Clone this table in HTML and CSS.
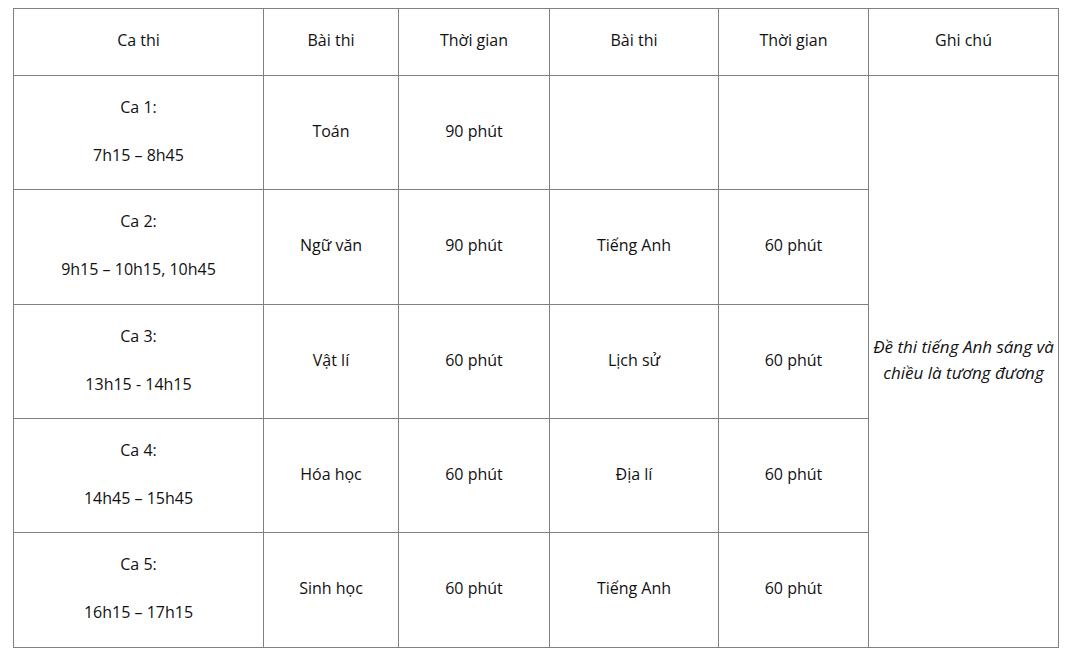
FILE: index.html
```html
<!DOCTYPE html>
<html lang="vi">
<head>
<meta charset="utf-8">
<title>Lịch thi</title>
<link rel="stylesheet" href="styles.css">
</head>
<body>
<table class="schedule">
  <colgroup>
    <col class="c1"><col class="c2"><col class="c3"><col class="c4"><col class="c5"><col class="c6">
  </colgroup>
  <thead>
    <tr class="head">
      <th>Ca thi</th><th>Bài thi</th><th>Thời gian</th><th>Bài thi</th><th>Thời gian</th><th>Ghi chú</th>
    </tr>
  </thead>
  <tbody>
    <tr class="row">
      <td><p>Ca 1:</p><p>7h15 – 8h45</p></td>
      <td>Toán</td><td>90 phút</td><td></td><td></td>
      <td rowspan="5" class="note"><em>Đề thi tiếng Anh sáng và chiều là tương đương</em></td>
    </tr>
    <tr class="row tall">
      <td><p>Ca 2:</p><p>9h15 – 10h15, 10h45</p></td>
      <td>Ngữ văn</td><td>90 phút</td><td>Tiếng Anh</td><td>60 phút</td>
    </tr>
    <tr class="row">
      <td><p>Ca 3:</p><p>13h15 - 14h15</p></td>
      <td>Vật lí</td><td>60 phút</td><td>Lịch sử</td><td>60 phút</td>
    </tr>
    <tr class="row">
      <td><p>Ca 4:</p><p>14h45 – 15h45</p></td>
      <td>Hóa học</td><td>60 phút</td><td>Địa lí</td><td>60 phút</td>
    </tr>
    <tr class="row tall">
      <td><p>Ca 5:</p><p>16h15 – 17h15</p></td>
      <td>Sinh học</td><td>60 phút</td><td>Tiếng Anh</td><td>60 phút</td>
    </tr>
  </tbody>
</table>
</body>
</html>
```
FILE: styles.css
```css
html, body {
  margin: 0;
  background: #fff;
}
body {
  padding: 8px 0 0 13px;
  font-family: "Open Sans", "Noto Sans", sans-serif;
  font-size: 16px;
  color: #111;
}
.schedule {
  border-collapse: collapse;
  table-layout: fixed;
  width: 1046px;
}
.c1 { width: 250px; }
.c2 { width: 135px; }
.c3 { width: 151px; }
.c4 { width: 169px; }
.c5 { width: 150px; }
.c6 { width: 190px; }
.schedule th,
.schedule td {
  border: 1px solid #808080;
  text-align: center;
  vertical-align: middle;
  font-weight: normal;
  padding: 0 8px 4px;
  line-height: 24px;
}
.head { height: 67px; }
.row { height: 114px; }
.row.tall { height: 115px; }
.schedule p { margin: 0; }
.schedule p + p { margin-top: 24px; }
.schedule td.note {
  padding: 0 0 4px;
  line-height: 26px;
  font-size: 17px;
}
.note em {
  font-style: italic;
}
```
